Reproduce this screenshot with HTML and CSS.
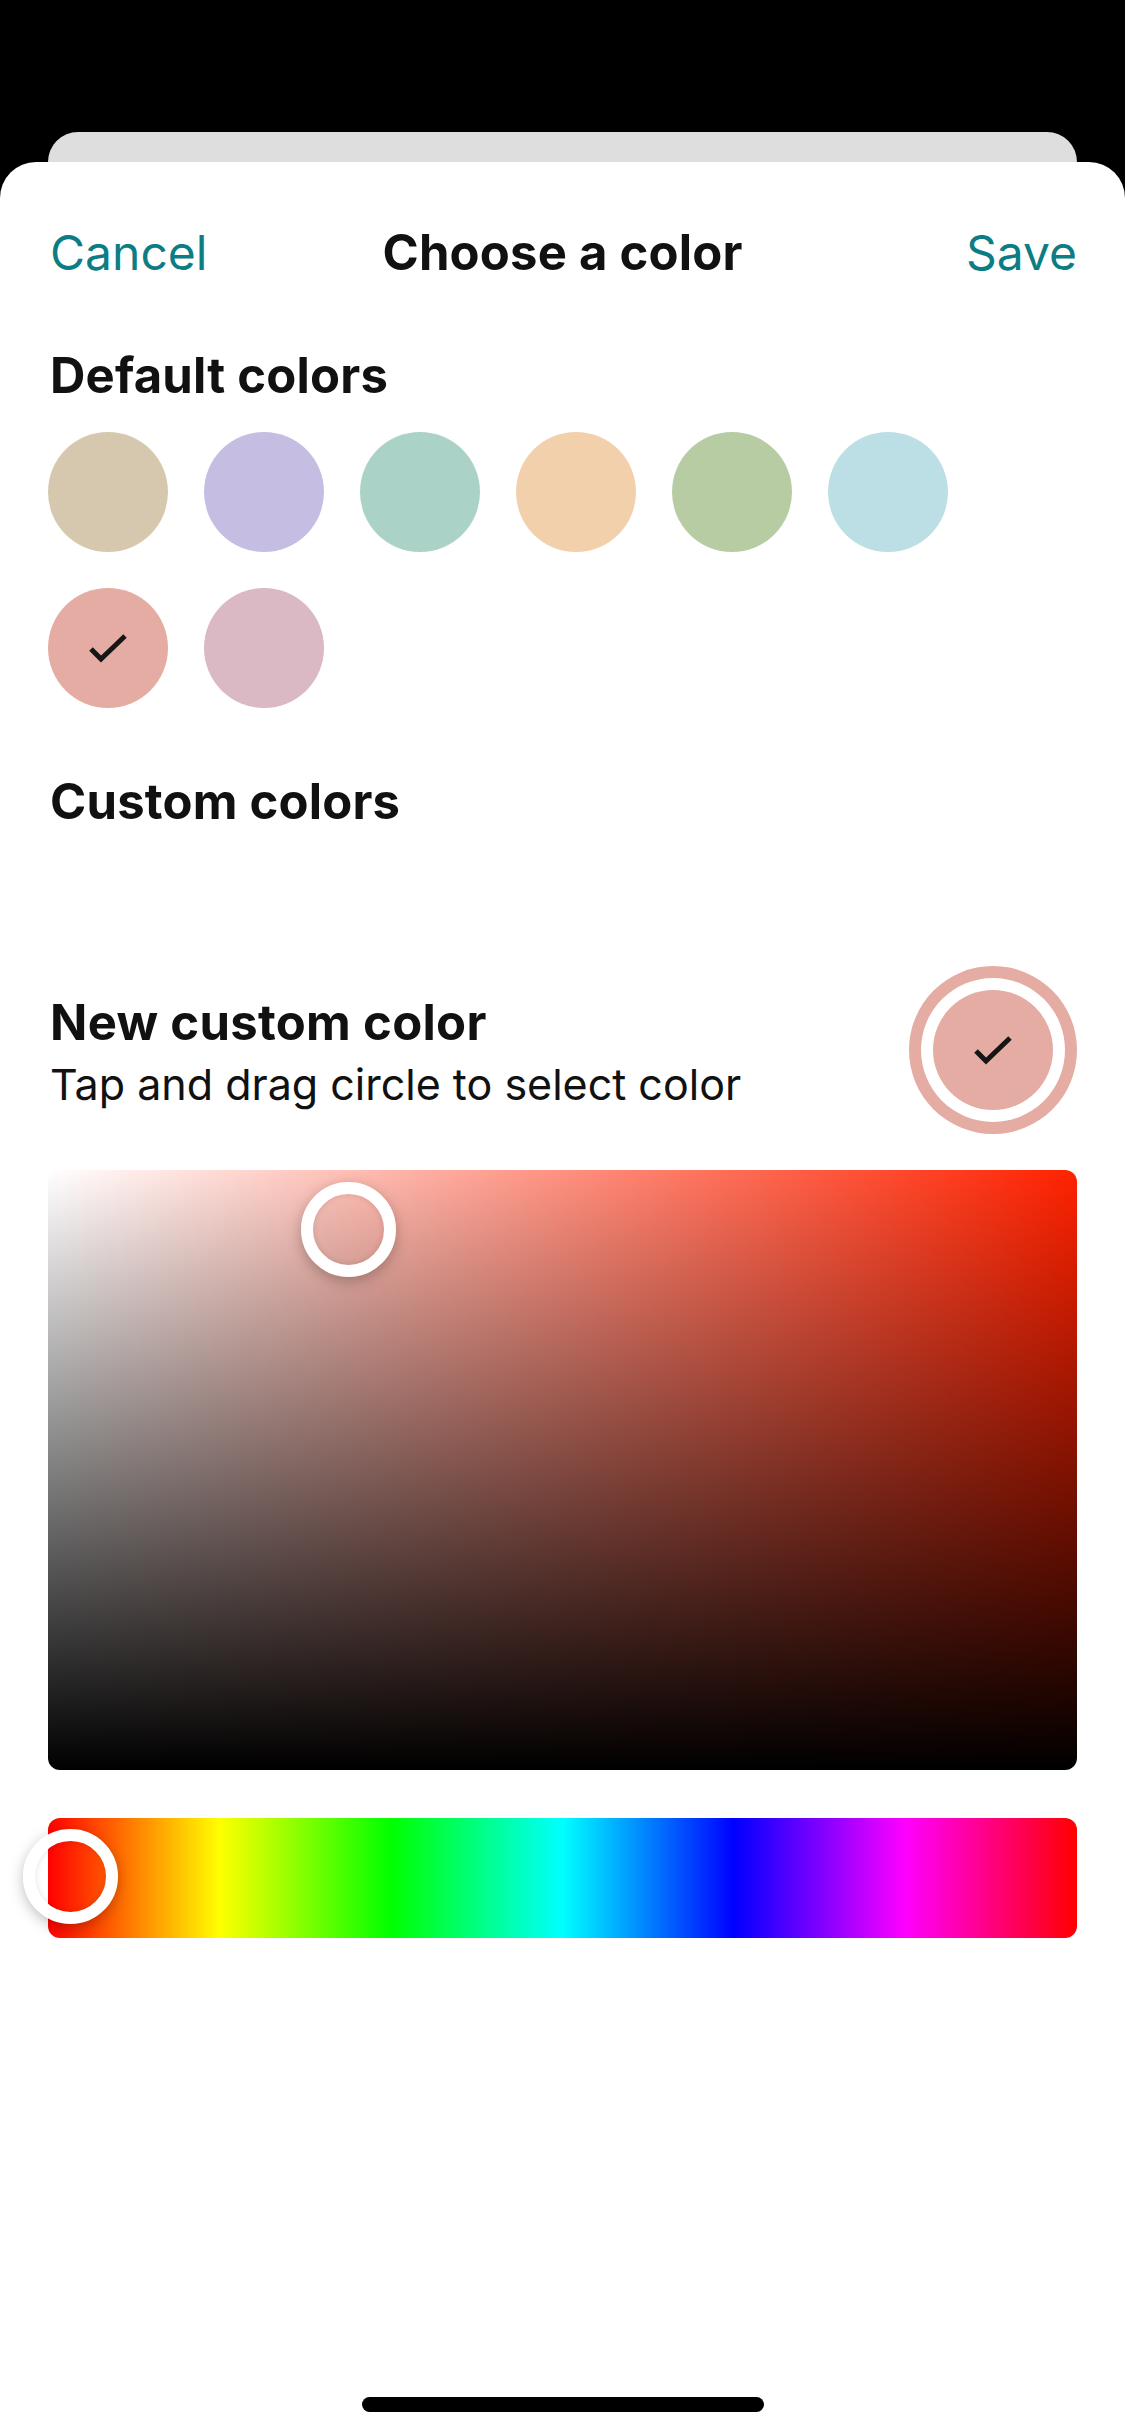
FILE: index.html
```html
<!DOCTYPE html>
<html lang="en">
<head>
<meta charset="utf-8">
<title>Choose a color</title>
<link rel="stylesheet" href="styles.css">
</head>
<body>
<div class="screen">
  <div class="backcard"></div>
  <div class="sheet">
    <header class="navbar">
      <span class="nav-btn nav-left">Cancel</span>
      <span class="nav-title">Choose a color</span>
      <span class="nav-btn nav-right">Save</span>
    </header>

    <h2 class="section-title first">Default colors</h2>
    <div class="swatches">
      <div class="swatch c1"></div>
      <div class="swatch c2"></div>
      <div class="swatch c3"></div>
      <div class="swatch c4"></div>
      <div class="swatch c5"></div>
      <div class="swatch c6"></div>
      <div class="swatch c7">
        <svg class="check" viewBox="0 0 120 120"><path d="M43 61 L53 71 L77 48"/></svg>
      </div>
      <div class="swatch c8"></div>
    </div>

    <h2 class="section-title custom">Custom colors</h2>

    <div class="new-row">
      <div class="new-text">
        <div class="new-title">New custom color</div>
        <div class="new-sub">Tap and drag circle to select color</div>
      </div>
      <div class="ring-outer">
        <div class="ring-inner">
          <div class="swatch c7">
            <svg class="check" viewBox="0 0 120 120"><path d="M43 61 L53 71 L77 48"/></svg>
          </div>
        </div>
      </div>
    </div>

    <div class="sv-picker">
      <div class="knob sv-knob"></div>
    </div>

    <div class="hue-bar">
      <div class="knob hue-knob"></div>
    </div>

    <div class="spacer"></div>
    <div class="home-indicator"></div>
  </div>
</div>
</body>
</html>
```

FILE: styles.css
```css
* { box-sizing: border-box; }

html, body {
  margin: 0;
  padding: 0;
  background: #000;
}

body {
  font-family: Inter, "Noto Sans", "Liberation Sans", sans-serif;
  color: #111;
}

.screen {
  width: 1125px;
  height: 2436px;
  background: #000;
  padding-top: 132px;
  display: flex;
  flex-direction: column;
  overflow: hidden;
}

.backcard {
  height: 30px;
  margin: 0 48px;
  background: #dedede;
  border-radius: 30px 30px 0 0;
  flex: none;
}

.sheet {
  flex: 1;
  background: #fff;
  border-radius: 36px 36px 0 0;
  padding: 67px 48px 0;
  display: flex;
  flex-direction: column;
}

.navbar {
  display: grid;
  grid-template-columns: 1fr auto 1fr;
  align-items: center;
  height: 48px;
  line-height: 48px;
  font-size: 48px;
}

.nav-btn {
  color: #0d7d85;
  font-weight: 400;
}

.nav-left { justify-self: start; padding-left: 2px; }
.nav-right { justify-self: end; }

.nav-title {
  font-size: 49px;
  font-weight: 700;
  color: #111;
  letter-spacing: 0.2px;
}

.section-title {
  margin: 0;
  font-size: 49px;
  line-height: 48px;
  font-weight: 700;
  color: #111;
  padding-left: 2px;
  letter-spacing: 0.2px;
}

.section-title.first { margin-top: 75px; }
.section-title.custom { margin-top: 70px; }

.swatches {
  margin-top: 32px;
  display: grid;
  grid-template-columns: repeat(6, 120px);
  gap: 36px;
}

.swatch {
  width: 120px;
  height: 120px;
  border-radius: 50%;
  position: relative;
}

.c1 { background: #d5c8ae; }
.c2 { background: #c6bee2; }
.c3 { background: #abd2c7; }
.c4 { background: #f2d0ab; }
.c5 { background: #b7cca3; }
.c6 { background: #bbdfe5; }
.c7 { background: #e4aca2; }
.c8 { background: #dab9c4; }

.check {
  width: 120px;
  height: 120px;
  display: block;
}

.check path {
  fill: none;
  stroke: #161616;
  stroke-width: 5;
  stroke-linecap: butt;
  stroke-linejoin: miter;
}

.new-row {
  margin-top: 140px;
  display: flex;
  justify-content: space-between;
  align-items: center;
}

.new-text {
  padding-top: 8px;
}

.new-title {
  font-size: 49px;
  line-height: 60px;
  font-weight: 700;
  color: #111;
  padding-left: 2px;
  letter-spacing: 0.3px;
}

.new-sub {
  font-size: 43px;
  line-height: 62px;
  font-weight: 400;
  color: #111;
  padding-left: 2px;
}

.ring-outer {
  padding: 12px;
  border-radius: 50%;
  background: #e4aca2;
}

.ring-inner {
  padding: 12px;
  border-radius: 50%;
  background: #fff;
}

.sv-picker {
  margin-top: 36px;
  height: 600px;
  border-radius: 12px;
  position: relative;
  background:
    linear-gradient(to top, #000 0%, rgba(0,0,0,0) 100%),
    linear-gradient(to right, #fff 0%, rgb(255, 34, 0) 100%);
}

.knob {
  position: absolute;
  width: 95px;
  height: 95px;
  border-radius: 50%;
  border: 12px solid #fff;
  box-shadow: 0 4px 14px rgba(0, 0, 0, 0.25), inset 0 0 6px rgba(0,0,0,0.12);
}

.sv-knob {
  left: 253px;
  top: 12px;
}

.hue-bar {
  margin-top: 48px;
  height: 120px;
  border-radius: 12px;
  position: relative;
  background: linear-gradient(to right,
    #ff0000 0%,
    #ffff00 16.667%,
    #00ff00 33.333%,
    #00ffff 50%,
    #0000ff 66.667%,
    #ff00ff 83.333%,
    #ff0000 100%);
}

.hue-knob {
  left: -25px;
  top: 11px;
}

.spacer { flex: 1; }

.home-indicator {
  align-self: center;
  width: 402px;
  height: 15px;
  border-radius: 8px;
  background: #000;
  margin-bottom: 24px;
}
```
